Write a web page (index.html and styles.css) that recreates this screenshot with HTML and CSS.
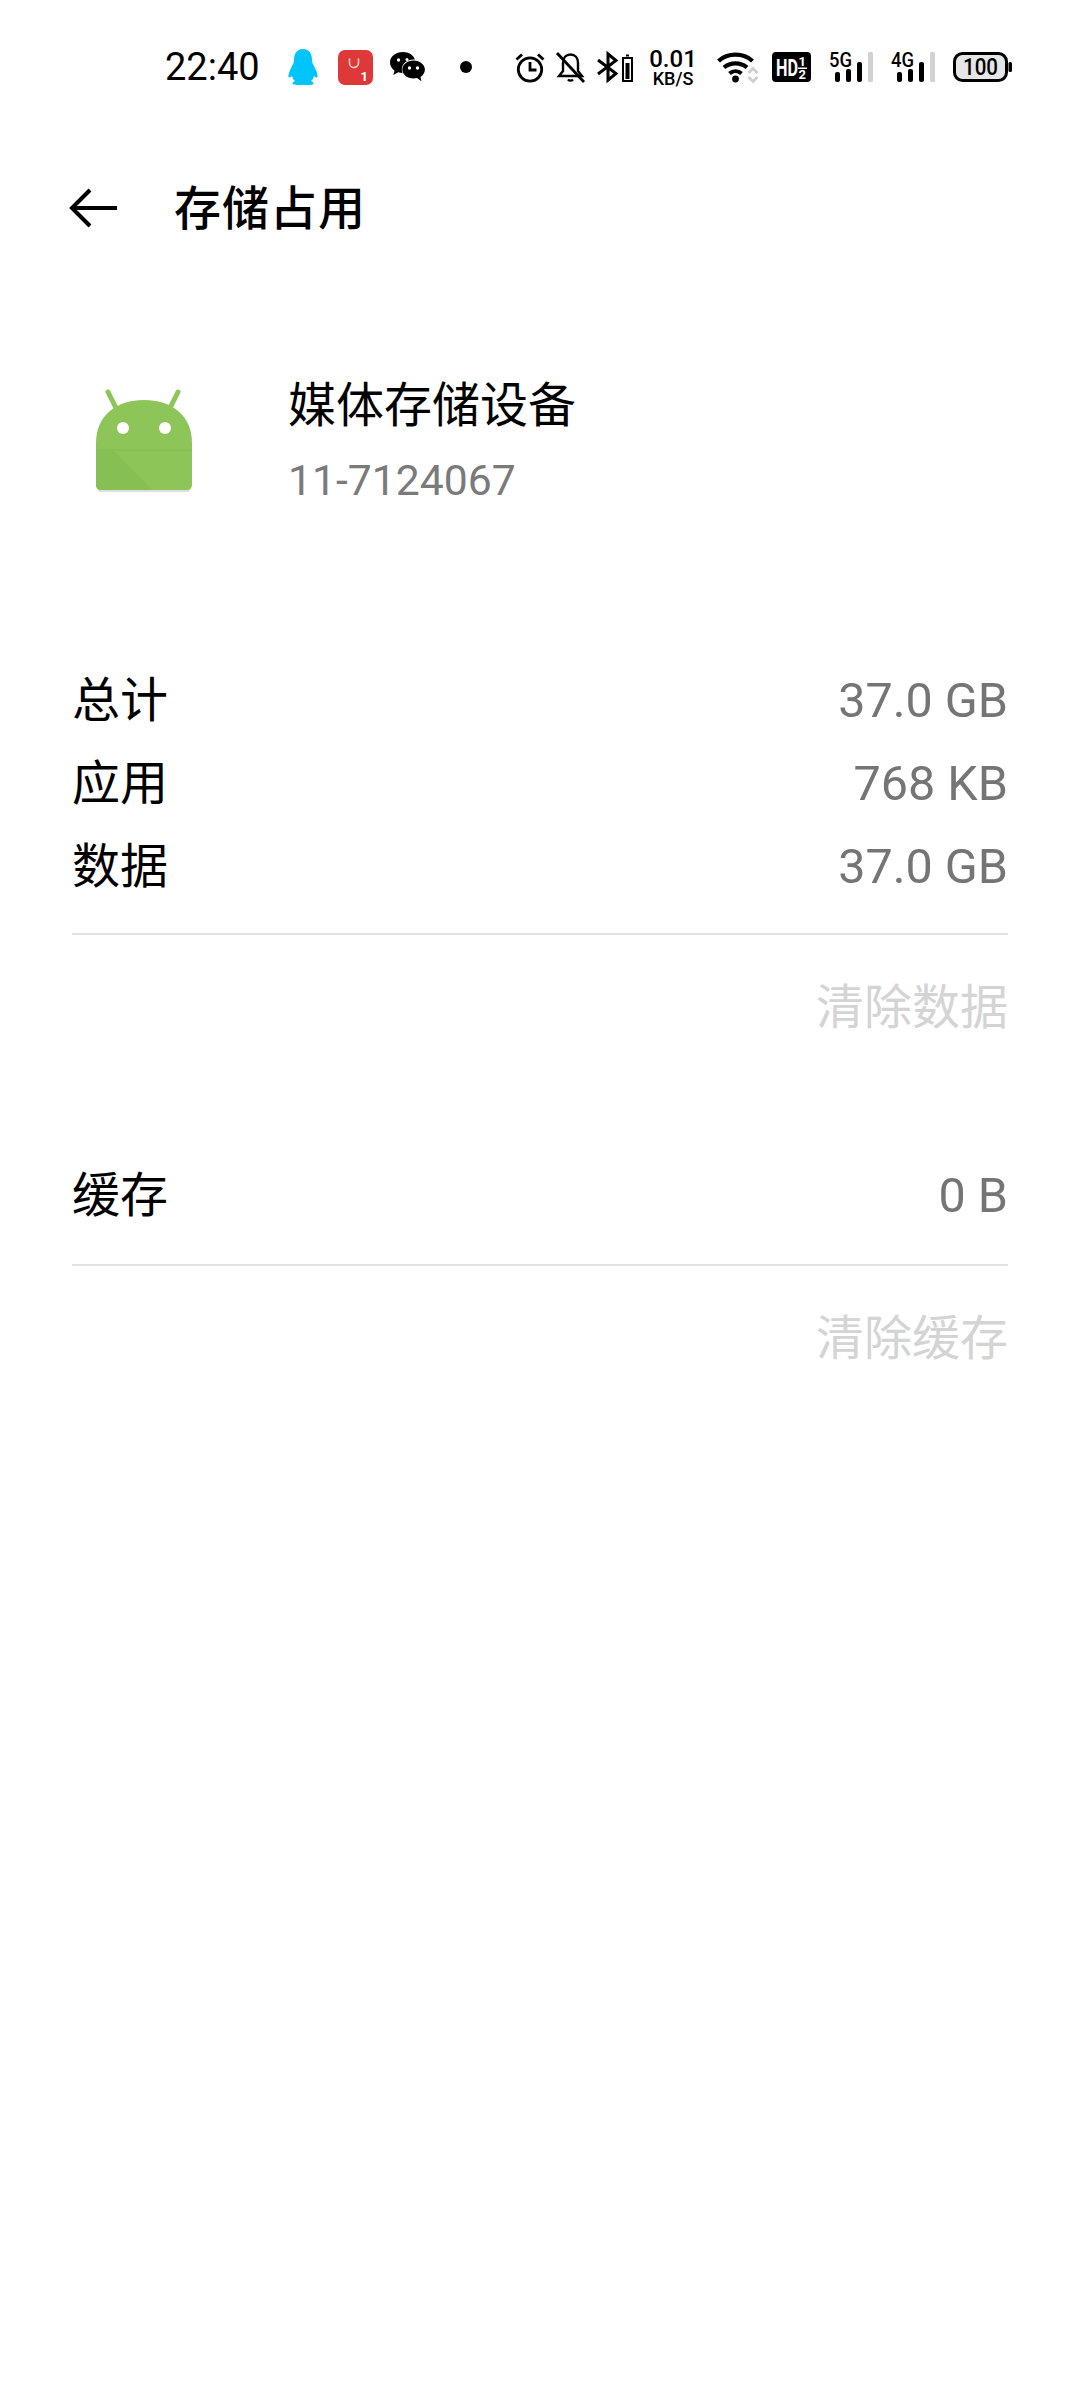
FILE: index.html
```html
<!DOCTYPE html>
<html lang="zh-CN">
<head>
    <meta charset="UTF-8">
    <meta name="viewport" content="width=device-width, initial-scale=1.0">
    <title>存储占用</title>
    <link rel="stylesheet" href="styles.css">
</head>
<body>
    <!-- Status Bar -->
    <div class="status-bar">
        <span class="time">22:40</span>
        <svg class="ic-qq" width="30" height="36" viewBox="0 0 30 36">
            <path fill="#00c4fb" d="M15 0C8.500 0 6 5 6 11c0 2-.5 3-1.500 5C2.500 20 0 25 .5 28c1 1 2.500 0 3.500-1 .5 2 1.500 4 3 5-1.500.5-2.500 1.500-2.500 2.500C4.500 36 8 36 15 36s10.500 0 10.500-1.500c0-1-1-2-2.500-2.500 1.500-1 2.500-3 3-5 1 1 2.500 2 3.500 1 .5-3-2-8-4-12-1-2-1.500-3-1.500-5C24 5 21.500 0 15 0z"/>
        </svg>
        <svg class="ic-shop" width="35" height="35" viewBox="0 0 35 35">
            <rect width="35" height="35" rx="7" fill="#de3838"/>
            <path d="M11.500 9v4a4.500 4.500 0 0 0 9 0V9" fill="none" stroke="#f6c9c9" stroke-width="1.600" stroke-linecap="round"/>
            <text x="22.500" y="31" class="shop-num">1</text>
        </svg>
        <svg class="ic-wechat" width="35" height="30" viewBox="0 0 35 30">
            <path d="M13 0C5.800 0 0 4.500 0 10.500c0 3.300 1.800 6.200 4.500 8.200L3.300 23l5-2.700c1.300.4 2.700.6 4.200.6-.5-1-.7-2.100-.7-3.300 0-5.700 5.300-10 11.700-10 .5 0 1 0 1.400.1C23.600 3.100 18.700 0 13 0z"/>
            <path d="M23.500 8.500c-6.200 0-11.200 4-11.200 9s5 9 11.200 9c1.200 0 2.400-.2 3.500-.5l4.500 3.300-1-4.400c2.600-1.700 4.400-4.300 4.400-7.400 0-5-5.200-9-11.400-9z"/>
            <circle cx="8.500" cy="8" r="1.700" fill="#fff"/><circle cx="17" cy="7.500" r="1.500" fill="#fff"/>
            <circle cx="19.500" cy="16" r="1.700" fill="#fff"/><circle cx="27.500" cy="16" r="1.700" fill="#fff"/>
        </svg>
        <span class="dot"></span>
        <svg class="ic-alarm" width="30" height="31" viewBox="0 0 30 31" fill="none" stroke="#000" stroke-width="2.800">
            <circle cx="15" cy="17.500" r="11.700"/>
            <path d="M15 10v8h6.500M1.500 7.500L7 2.500M28.500 7.500L23 2.500"/>
        </svg>
        <svg class="ic-bell" width="31" height="31" viewBox="0 0 31 31" fill="none" stroke="#000" stroke-width="2.400">
            <path d="M8 11c0-5 3-8.500 7.500-8.500S23 6 23 11v8l4 5H4l4-5z"/>
            <path d="M13 27.500a3 2.500 0 0 0 5 0" stroke-width="2.200"/>
            <path d="M2 1l27 29" stroke-width="2.800"/>
        </svg>
        <svg class="ic-bt" width="36" height="30" viewBox="0 0 36 30" fill="none" stroke="#000" stroke-width="3">
            <path d="M1 8l18 13.500L11 28V2l8 6.500L1 22"/>
            <rect x="26" y="6" width="9" height="23" stroke-width="2"/>
            <rect x="29" y="2.500" width="3" height="2" fill="#000" stroke="none"/>
            <rect x="28.500" y="11" width="4" height="16" fill="#000" stroke="none"/>
        </svg>
        <div class="net-speed">
            <span class="speed-val">0.01</span>
            <span class="speed-unit">KB/S</span>
        </div>
        <svg class="ic-wifi" width="42" height="31" viewBox="0 0 42 31">
            <g fill="none" stroke="#000" stroke-width="4.200">
                <path d="M1.500 9C10.500 .5 26.500 .5 35.500 9"/>
                <path d="M7 15.500C13.500 10 23.500 10 30 15.500"/>
                <path d="M12.500 21.500C16 18.500 21 18.500 24.500 21.500"/>
            </g>
            <circle cx="18.500" cy="27" r="3.400"/>
            <path d="M31.500 21l4.500-4.500 4.500 4.500M31.500 25l4.500 4.500 4.500-4.500" fill="none" stroke="#cfcfcf" stroke-width="2.800"/>
        </svg>
        <svg class="ic-hd" width="39" height="30" viewBox="0 0 39 30">
            <rect width="39" height="30" rx="4"/>
            <text x="4" y="24" class="hd-text" textLength="22" lengthAdjust="spacingAndGlyphs">HD</text>
            <text x="26.500" y="14" class="hd-small">1</text>
            <rect x="26" y="15.500" width="9" height="1.500" fill="#fff"/>
            <text x="26.500" y="27" class="hd-small">2</text>
        </svg>
        <svg class="ic-sig" width="44" height="31" viewBox="0 0 44 31">
            <text x="0" y="15" class="sig-text" textLength="23" lengthAdjust="spacingAndGlyphs">5G</text>
            <rect x="6" y="20" width="5" height="10" rx="2"/>
            <rect x="17" y="17" width="5" height="13" rx="2"/>
            <rect x="28" y="10" width="5" height="20" rx="2"/>
            <rect x="39" y="0" width="5" height="30" rx="1.500" fill="#d2d2d2"/>
        </svg>
        <svg class="ic-sig ic-sig2" width="44" height="31" viewBox="0 0 44 31">
            <text x="0" y="15" class="sig-text" textLength="23" lengthAdjust="spacingAndGlyphs">4G</text>
            <rect x="6" y="20" width="5" height="10" rx="2"/>
            <rect x="17" y="17" width="5" height="13" rx="2"/>
            <rect x="28" y="10" width="5" height="20" rx="2"/>
            <rect x="39" y="0" width="5" height="30" rx="1.500" fill="#d2d2d2"/>
        </svg>
        <svg class="ic-batt" width="60" height="30" viewBox="0 0 60 30">
            <rect x="1.500" y="1.500" width="52" height="27" rx="8" fill="#e6e6e6" stroke="#000" stroke-width="3"/>
            <rect x="55.500" y="10" width="3.500" height="10" rx="1.500"/>
            <text x="27.500" y="23" class="batt-text" textLength="35" lengthAdjust="spacingAndGlyphs">100</text>
        </svg>
    </div>

    <!-- Toolbar -->
    <header class="toolbar">
        <svg class="back" width="50" height="40" viewBox="0 0 50 40" fill="none" stroke="#000" stroke-width="4">
            <path d="M48 20H3M21 2L3 20 21 38"/>
        </svg>
        <h1>存储占用</h1>
    </header>

    <!-- App Info -->
    <section class="app-info">
        <svg class="app-icon" width="100" height="106" viewBox="0 0 100 106">
            <path d="M14 5l11 22M84 5L73 27" stroke="#8dc559" stroke-width="5" stroke-linecap="round"/>
            <rect x="4" y="100" width="92" height="5" rx="2.500" fill="#dfdfdf"/>
            <path d="M2 56C2 28 23 13 50 13s48 15 48 43v41c0 4-2 6-5 6H7c-3 0-5-2-5-6z" fill="#8dc559"/>
            <path d="M2 62h96v2H20l38 39H7c-3 0-5-2-5-6z" fill="#86bf53"/>
            <circle cx="29" cy="41" r="6" fill="#fff"/>
            <circle cx="71" cy="41" r="6" fill="#fff"/>
        </svg>
        <div class="app-text">
            <div class="app-name">媒体存储设备</div>
            <div class="app-id">11-7124067</div>
        </div>
    </section>

    <!-- Storage -->
    <section class="usage">
        <div class="row"><span>总计</span><span class="val">37.0 GB</span></div>
        <div class="row"><span>应用</span><span class="val">768 KB</span></div>
        <div class="row"><span>数据</span><span class="val">37.0 GB</span></div>
    </section>
    <div class="action"><span>清除数据</span></div>

    <section class="usage cache">
        <div class="row"><span>缓存</span><span class="val">0 B</span></div>
    </section>
    <div class="action"><span>清除缓存</span></div>
</body>
</html>
```

FILE: styles.css
```css
/* General Styles */
body {
    margin: 0;
    width: 1080px;
    height: 2400px;
    overflow: hidden;
    background-color: #fff;
    color: #000;
    font-family: Roboto, "Noto Sans CJK SC", sans-serif;
}

/* Status Bar */
.status-bar {
    display: flex;
    align-items: center;
    height: 134px;
    padding-left: 165px;
}

.time {
    width: 95px;
    font-size: 38px;
    line-height: 1;
    white-space: nowrap;
}

.status-bar svg {
    display: block;
    flex: none;
    overflow: visible;
}

.ic-qq { margin-left: 28px; }
.ic-shop { margin-left: 20px; }
.ic-wechat { margin-left: 17px; }
.ic-alarm { margin-left: 43px; }
.ic-bell { margin-left: 10px; }
.ic-bt { margin-left: 11px; }
.ic-wifi { margin-left: 19px; }
.ic-hd { margin-left: 13px; }
.ic-sig { margin-left: 18px; }
.ic-sig2 { margin-left: 18px; }
.ic-batt { margin-left: 18px; }

.dot {
    width: 12px;
    height: 12px;
    margin-left: 35px;
    border-radius: 50%;
    background-color: #000;
}

.net-speed {
    display: flex;
    flex-direction: column;
    align-items: center;
    width: 50px;
    margin-top: 2px;
    margin-left: 15px;
    font-weight: 500;
}

.speed-val { font-size: 24px; line-height: 22px; }
.speed-unit { font-size: 18px; line-height: 18px; }

.shop-num { font: 700 13px Roboto, sans-serif; fill: #fff; }
.hd-text { font: 700 24px Roboto, sans-serif; fill: #fff; }
.hd-small { font: 700 13px Roboto, sans-serif; fill: #fff; }
.sig-text { font: 500 20px Roboto, sans-serif; }
.batt-text { font: 500 23px Roboto, sans-serif; text-anchor: middle; }

/* Toolbar */
.toolbar {
    display: flex;
    align-items: center;
    height: 148px;
    padding-left: 69px;
}

.toolbar h1 {
    margin: 0 0 0 55px;
    font-size: 47px;
    font-weight: 500;
    letter-spacing: 1px;
    line-height: 1;
}

/* App Info */
.app-info {
    display: flex;
    align-items: center;
    height: 160px;
    margin-top: 75px;
    padding-left: 94px;
}

.app-icon {
    flex: none;
    margin-top: 6px;
}

.app-text {
    margin-left: 94px;
}

.app-name {
    font-size: 48px;
    line-height: 72px;
}

.app-id {
    margin-top: 13px;
    font-size: 42.700px;
    line-height: 50px;
    color: #7a7a7a;
}

/* Storage Rows */
.usage {
    margin: 142px 72px 0;
    padding-bottom: 25px;
    border-bottom: 2px solid #e2e2e2;
}

.usage.cache {
    margin-top: 83px;
    padding-bottom: 27px;
}

.row {
    display: flex;
    justify-content: space-between;
    align-items: baseline;
    height: 83px;
    font-size: 48px;
    line-height: 83px;
}

.val {
    color: #757575;
    font-size: 48.500px;
}

.action {
    display: flex;
    justify-content: flex-end;
    align-items: center;
    height: 136px;
    padding-right: 72px;
    font-size: 48px;
    color: #d4d4d4;
}
```
